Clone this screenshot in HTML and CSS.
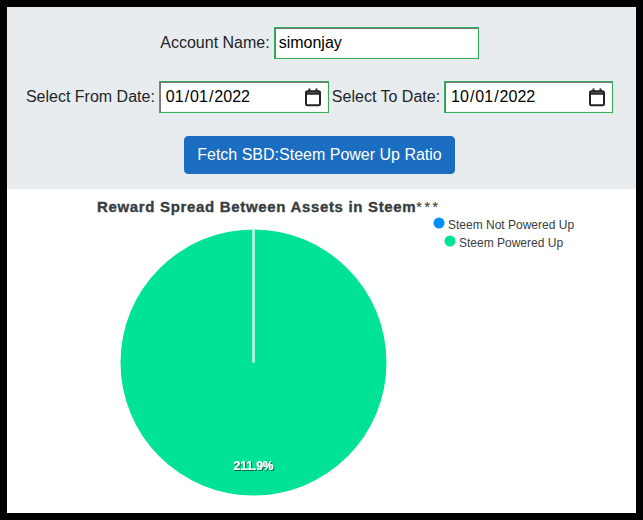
FILE: index.html
```html
<!DOCTYPE html>
<html lang="en">
<head>
<meta charset="utf-8">
<title>Reward Spread</title>
<link rel="stylesheet" href="styles.css">
</head>
<body>
<main class="frame">
  <section class="panel">
    <div class="row">
      <label class="field">Account Name: <input class="input input-name" type="text" value="simonjay"></label>
    </div>
    <div class="row">
      <label class="field">Select From Date: <input class="input input-date" type="date" value="2022-01-01"></label>
      <label class="field">Select To Date: <input class="input input-date input-to" type="date" value="2022-10-01"></label>
    </div>
    <div class="row">
      <button class="fetch" type="button">Fetch SBD:Steem Power Up Ratio</button>
    </div>
  </section>
  <section class="chart">
    <svg class="chart-svg" width="629" height="324" viewBox="7 189 629 324">
      <defs>
        <filter id="shadow" x="-20%" y="-30%" width="140%" height="170%">
          <feDropShadow dx="1" dy="1" stdDeviation="0.6" flood-color="#00392a" flood-opacity="0.75"/>
        </filter>
      </defs>
      <text class="title" x="97" y="212">Reward Spread Between Assets in Steem<tspan class="stars">***</tspan></text>
      <circle cx="439" cy="223" r="5.5" fill="#008ffb"/>
      <text class="legend" x="448" y="229">Steem Not Powered Up</text>
      <circle cx="450" cy="241" r="5.5" fill="#00e396"/>
      <text class="legend" x="459" y="247">Steem Powered Up</text>
      <circle cx="253.5" cy="362.5" r="133" fill="#00e396"/>
      <line x1="253.5" y1="229" x2="253.5" y2="362.5" stroke="#e6f8f2" stroke-width="2.4"/>
      <text class="pct" x="253.5" y="470" filter="url(#shadow)">211.9%</text>
    </svg>
  </section>
</main>
</body>
</html>
```

FILE: styles.css
```css
* { box-sizing: border-box; }
html, body { margin: 0; padding: 0; background: #000; }
body { width: 643px; height: 520px; overflow: hidden; font-family: "Liberation Sans", Arial, sans-serif; }
.frame { margin: 7px; width: 629px; height: 506px; background: #fff; }
.panel {
  height: 182px;
  background: #e9ecef;
  padding: 20px 4px 0 0;
  display: flex;
  flex-direction: column;
  gap: 22px;
  color: #212529;
  font-size: 16px;
}
.row { display: flex; justify-content: center; align-items: center; gap: 3px; height: 32px; }
.row + .row + .row { height: 38px; margin-top: 1px; }
.field { display: flex; align-items: center; gap: 4px; }
.input {
  height: 32px;
  border: 1px solid #34ad5a;
  box-shadow: inset 1px 1px 0 #767676, inset -1px -1px 0 #f4f4f4;
  background: #fff;
  padding: 1px 6px 1px 4px;
  font: 16px "Liberation Sans", Arial, sans-serif;
  color: #000;
  outline: none;
}
.input-name { width: 205px; }
.input-date { width: 170px; padding-left: 5px; padding-right: 5px; }
.input-to { width: 169px; }
.input-date::-webkit-calendar-picker-indicator {
  width: 20px;
  height: 20px;
  margin: 0;
  padding: 0;
  background: url("data:image/svg+xml,%3Csvg xmlns='http://www.w3.org/2000/svg' width='20' height='20' viewBox='0 0 20 20'%3E%3Cg fill='none' stroke='%23222'%3E%3Crect x='3' y='4.2' width='14' height='14' rx='1.5' stroke-width='2'/%3E%3Cpath d='M3 6.5h14' stroke-width='2.4'/%3E%3Cpath d='M6.5 1.5v3M13.5 1.5v3' stroke-width='2'/%3E%3C/g%3E%3C/svg%3E") center no-repeat;
}
.fetch {
  width: 271px;
  height: 38px;
  background: #1a6dc0;
  border: 1px solid #1a6dc0;
  border-radius: 4px;
  color: #fff;
  font: 16px "Liberation Sans", Arial, sans-serif;
  padding: 0;
}
.chart { height: 324px; }
.chart-svg { display: block; }
.title { font: 900 15px "Liberation Sans", Arial, sans-serif; letter-spacing: 0.67px; fill: #373d3f; stroke: #373d3f; stroke-width: 0.35px; }
.stars { font-weight: 400; letter-spacing: 2.6px; font-size: 14px; stroke-width: 0.15px; }
.legend { font: 12px "Liberation Sans", Arial, sans-serif; fill: #373d3f; }
.pct { font: bold 12px "Liberation Sans", Arial, sans-serif; fill: #fff; stroke: #fff; stroke-width: 0.2px; text-anchor: middle; }
```
